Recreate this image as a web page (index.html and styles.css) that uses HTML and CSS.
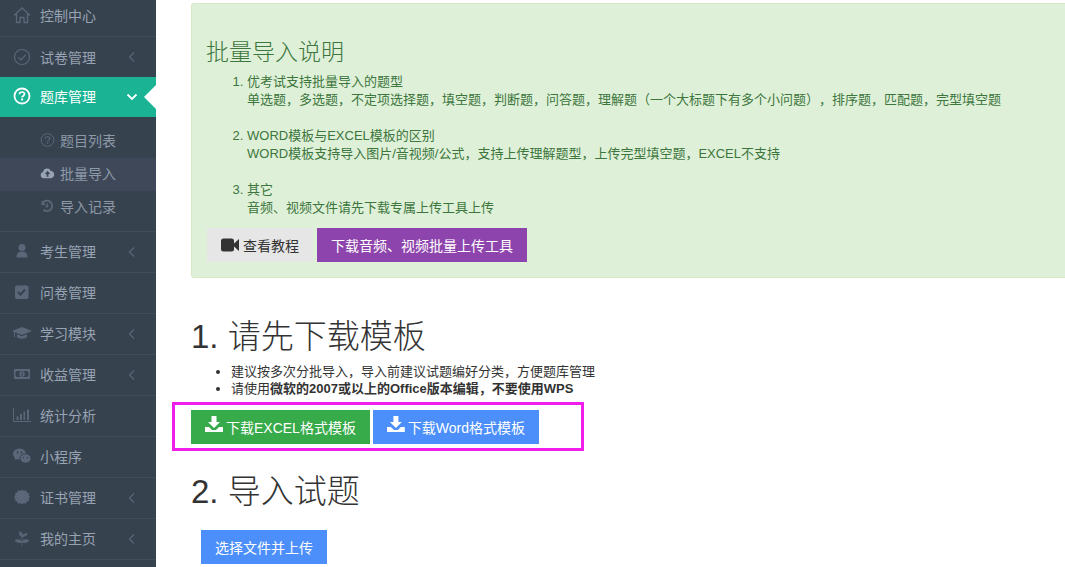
FILE: index.html
```html
<!DOCTYPE html>
<html lang="zh-CN">

<head>
  <meta charset="UTF-8" />
  <title>批量导入</title>
  <link rel="stylesheet" href="styles.css">
</head>

<body>

  <aside class="sidebar">
    <a class="nav-item nav-first">
      <svg class="nav-icon" viewBox="0 0 18 18"><path d="M1 9.500 9 2l8 7.500M3.500 8v8.500h3.500v-5h4v5h3.500V8" fill="none" stroke="currentColor" stroke-width="1.300"/></svg>
      <span>控制中心</span>
    </a>
    <a class="nav-item">
      <svg class="nav-icon" viewBox="0 0 18 18"><circle cx="9" cy="9" r="7.500" fill="none" stroke="currentColor" stroke-width="1.200"/><path d="M5.500 9.500 8 12l4.500-5" fill="none" stroke="currentColor" stroke-width="1.200"/></svg>
      <span>试卷管理</span>
      <svg class="nav-arrow" viewBox="0 0 8 12"><path d="M6 1.500 1.500 6 6 10.500" fill="none" stroke="currentColor" stroke-width="1.100"/></svg>
    </a>
    <a class="nav-item active">
      <svg class="nav-icon" viewBox="0 0 18 18"><circle cx="9" cy="9" r="7.500" fill="none" stroke="currentColor" stroke-width="1.800"/><path d="M6.500 7.200C6.500 5.800 7.600 5 9 5s2.500.8 2.500 2.100c0 1.900-2.400 1.800-2.400 3.500" fill="none" stroke="currentColor" stroke-width="1.700"/><rect x="8.100" y="11.500" width="2" height="2" fill="currentColor"/></svg>
      <span>题库管理</span>
      <svg class="nav-arrow down" viewBox="0 0 12 8"><path d="M1.500 1.500 6 6l4.500-4.500" fill="none" stroke="currentColor" stroke-width="1.800"/></svg>
    </a>
    <div class="subnav">
      <a class="sub-item">
        <svg class="sub-icon" viewBox="0 0 14 14"><circle cx="7" cy="7" r="6.400" fill="none" stroke="currentColor" stroke-width="1"/><path d="M4.800 5.600C4.800 4.400 5.800 3.700 7 3.700s2.200.7 2.200 1.800C9.200 7 7.100 7 7.100 8.600" fill="none" stroke="currentColor" stroke-width="1.100"/><rect x="6.400" y="9.400" width="1.400" height="1.400" fill="currentColor"/></svg>
        <span>题目列表</span>
      </a>
      <a class="sub-item current">
        <svg class="sub-icon" viewBox="0 0 16 14"><path d="M4 12.500a3.300 3.300 0 0 1-.7-6.500A4.300 4.300 0 0 1 11.500 4.800a3.900 3.900 0 0 1 .5 7.700z" fill="currentColor"/><path d="M8 4.500 5 8h2v3h2V8h2z" fill="#3e4859"/></svg>
        <span>批量导入</span>
      </a>
      <a class="sub-item">
        <svg class="sub-icon" viewBox="0 0 14 14"><path d="M2.500 3.500A5.200 5.200 0 1 1 3 10.800" fill="none" stroke="currentColor" stroke-width="1.800"/><path d="M1 1.500 5.500 6H1z" fill="currentColor"/><path d="M7 4.500V7.500H4.800" fill="none" stroke="currentColor" stroke-width="1.300"/></svg>
        <span>导入记录</span>
      </a>
    </div>
    <a class="nav-item">
      <svg class="nav-icon" viewBox="0 0 18 18"><circle cx="9" cy="5.500" r="3.500" fill="currentColor"/><path d="M3.500 15.500c0-4 1.500-6 5.500-6s5.500 2 5.500 6z" fill="currentColor"/></svg>
      <span>考生管理</span>
      <svg class="nav-arrow" viewBox="0 0 8 12"><path d="M6 1.500 1.500 6 6 10.500" fill="none" stroke="currentColor" stroke-width="1.100"/></svg>
    </a>
    <a class="nav-item">
      <svg class="nav-icon" viewBox="0 0 18 18"><rect x="2" y="2.500" width="13.500" height="13.500" rx="2" fill="currentColor"/><path d="M5 9 7.500 11.500l4.500-5" fill="none" stroke="#37424f" stroke-width="2"/></svg>
      <span>问卷管理</span>
    </a>
    <a class="nav-item">
      <svg class="nav-icon wide" viewBox="0 0 20 18"><path d="M10 3 0 7l2 .8V13h1V8.200l2 .8 5 2 10-4z" fill="currentColor"/><path d="M5 10.200V13c1.500 2 8.500 2 10 0v-2.800L10 12.200z" fill="currentColor"/></svg>
      <span>学习模块</span>
      <svg class="nav-arrow" viewBox="0 0 8 12"><path d="M6 1.500 1.500 6 6 10.500" fill="none" stroke="currentColor" stroke-width="1.100"/></svg>
    </a>
    <a class="nav-item">
      <svg class="nav-icon wide" viewBox="0 0 20 18"><path d="M2 4h16v10H2zM4.500 6a1.500 1.500 0 0 1-1 1v4a1.500 1.500 0 0 1 1 1h11a1.500 1.500 0 0 1 1-1V7a1.500 1.500 0 0 1-1-1z" fill="currentColor" fill-rule="evenodd"/><path d="M10 6.200a2.800 2.800 0 1 0 .01 0zM9.500 7.500h1v3.500h-1z" fill="currentColor" fill-rule="evenodd"/></svg>
      <span>收益管理</span>
      <svg class="nav-arrow" viewBox="0 0 8 12"><path d="M6 1.500 1.500 6 6 10.500" fill="none" stroke="currentColor" stroke-width="1.100"/></svg>
    </a>
    <a class="nav-item">
      <svg class="nav-icon wide" viewBox="0 0 20 18"><path d="M1.500 2v13.500H19" fill="none" stroke="currentColor" stroke-width="1"/><path d="M4.500 10.500h2V14h-2zM8 8h2v6H8zM11.500 5.500h1.500V14h-1.500zM15 3.500h2V14h-2z" fill="currentColor"/></svg>
      <span>统计分析</span>
    </a>
    <a class="nav-item">
      <svg class="nav-icon wide" viewBox="0 0 20 18"><ellipse cx="7.500" cy="7" rx="6.500" ry="5.500" fill="currentColor"/><path d="m3.500 10.500-.8 2.800 3-1.500z" fill="currentColor"/><ellipse cx="13.500" cy="11.500" rx="5.500" ry="4.700" fill="currentColor" stroke="#37424f" stroke-width="1"/><circle cx="5.500" cy="5.500" r=".9" fill="#37424f"/><circle cx="9.500" cy="5.500" r=".9" fill="#37424f"/><circle cx="11.500" cy="10.500" r=".7" fill="#37424f"/><circle cx="15.500" cy="10.500" r=".7" fill="#37424f"/></svg>
      <span>小程序</span>
    </a>
    <a class="nav-item">
      <svg class="nav-icon" viewBox="0 0 18 18"><path d="M9 1.500l1.700 1.500 2.200-.7.800 2.100 2.200.6-.3 2.300L17 9l-1.400 1.700.3 2.300-2.200.6-.8 2.100-2.200-.7L9 16.500 7.300 15l-2.200.7-.8-2.100-2.200-.6.300-2.300L1 9l1.400-1.700-.3-2.300 2.200-.6.800-2.100 2.200.7z" fill="currentColor"/></svg>
      <span>证书管理</span>
      <svg class="nav-arrow" viewBox="0 0 8 12"><path d="M6 1.500 1.500 6 6 10.500" fill="none" stroke="currentColor" stroke-width="1.100"/></svg>
    </a>
    <a class="nav-item">
      <svg class="nav-icon" viewBox="0 0 18 18"><path d="M9 3v14M9 8C7 7 6 5 6.500 2.500 8.500 3.500 9.500 5.500 9 8zM9 8c2-1 4-1 5.500-3-2-1-4.500 0-5.500 3zM9 13c-2.500 1-5.500.5-7-1.500 2.500-1.500 6-1 7 1.500zM9 13c1-2.500 4.500-3 7-1.500-1.500 2-4.500 2.500-7 1.500z" fill="currentColor" stroke="currentColor" stroke-width=".7"/></svg>
      <span>我的主页</span>
      <svg class="nav-arrow" viewBox="0 0 8 12"><path d="M6 1.500 1.500 6 6 10.500" fill="none" stroke="currentColor" stroke-width="1.100"/></svg>
    </a>
  </aside>

  <main class="content">
    <section class="notice">
      <h3>批量导入说明</h3>
      <ol>
        <li>优考试支持批量导入的题型<br>单选题，多选题，不定项选择题，填空题，判断题，问答题，理解题（一个大标题下有多个小问题），排序题，匹配题，完型填空题<br><br></li>
        <li>WORD模板与EXCEL模板的区别<br>WORD模板支持导入图片/音视频/公式，支持上传理解题型，上传完型填空题，EXCEL不支持<br><br></li>
        <li>其它<br>音频、视频文件请先下载专属上传工具上传</li>
      </ol>
      <div class="notice-btns">
        <a class="btn btn-grey">
          <svg class="btn-video" viewBox="0 0 18 14"><rect x="0" y="0.500" width="13" height="13" rx="2.500" fill="currentColor"/><path d="M13 5.500 18 1v12l-5-4.500z" fill="currentColor"/></svg>
          查看教程
        </a>
        <a class="btn btn-purple">下载音频、视频批量上传工具</a>
      </div>
    </section>

    <h1 class="step-title">1. 请先下载模板</h1>
    <ul class="tips">
      <li>建议按多次分批导入，导入前建议试题编好分类，方便题库管理</li>
      <li>请使用<b>微软的2007或以上的Office版本编辑，不要使用WPS</b></li>
    </ul>
    <div class="tpl-btns">
      <a class="btn btn-green">
        <svg class="btn-dl" viewBox="0 0 18 16"><path d="M6.500 0h5v6h3.500L9 12 3 6h3.500z" fill="currentColor"/><path d="M0 11h4l3 3h4l3-3h4v5H0z" fill="currentColor"/></svg>
        下载EXCEL格式模板
      </a>
      <a class="btn btn-blue">
        <svg class="btn-dl" viewBox="0 0 18 16"><path d="M6.500 0h5v6h3.500L9 12 3 6h3.500z" fill="currentColor"/><path d="M0 11h4l3 3h4l3-3h4v5H0z" fill="currentColor"/></svg>
        下载Word格式模板
      </a>
      <div class="mark-box"></div>
    </div>

    <h1 class="step-title second">2. 导入试题</h1>
    <a class="btn btn-blue btn-upload">选择文件并上传</a>
  </main>

</body>

</html>
```

FILE: styles.css
```css
html,
body {
  margin: 0;
  padding: 0;
  height: 567px;
  overflow: hidden;
  background: #ffffff;
  font-family: "Liberation Sans", "Noto Sans CJK SC", sans-serif;
  font-size: 13px;
  color: #333;
  text-spacing-trim: space-all;
}

body {
  display: flex;
}

/* sidebar */
.sidebar {
  width: 156px;
  flex: none;
  height: 567px;
  overflow: hidden;
  background: #37424f;
  color: #8d99a8;
}

.nav-item {
  position: relative;
  display: flex;
  align-items: center;
  box-sizing: border-box;
  height: 41px;
  padding-bottom: 2px;
  border-bottom: 1px solid #414c5c;
  font-size: 14px;
  color: #98a3b3;
}

.nav-first {
  height: 37px;
  padding-bottom: 6px;
}

.nav-first + .nav-item {
  height: 40px;
  padding-bottom: 1px;
  border-bottom: none;
}

.nav-item.active {
  height: 40px;
  background: #1ab394;
  color: #ffffff;
  border-bottom: none;
}

.nav-item.active::after {
  content: "";
  position: absolute;
  right: 0;
  top: 8px;
  border: 12px solid transparent;
  border-right-color: #ffffff;
  border-left: none;
}

.nav-icon {
  width: 18px;
  height: 18px;
  margin: 0 9px 0 13px;
  flex: none;
  color: #5b6779;
}

.nav-icon.wide {
  width: 20px;
  margin: 0 8px 0 12px;
}

.nav-item.active .nav-icon {
  color: #ffffff;
}

.nav-arrow {
  position: absolute;
  right: 20px;
  top: 14px;
  width: 8px;
  height: 12px;
  color: #5b6779;
}

.nav-arrow.down {
  width: 12px;
  height: 8px;
  right: 18px;
  top: 16px;
  color: #ffffff;
}

.subnav {
  padding: 8px 0 7px;
  border-bottom: 1px solid #414c5c;
}

.sub-item {
  display: flex;
  align-items: center;
  box-sizing: border-box;
  height: 33px;
  padding: 0 0 3px 40px;
  font-size: 14px;
  color: #8d99a8;
}

.sub-item.current {
  background: #3e4859;
}

.sub-icon {
  width: 15px;
  height: 14px;
  margin-right: 5px;
  flex: none;
  color: #5b6779;
}

.sub-item.current .sub-icon {
  color: #98a3b3;
}

/* content */
.content {
  flex: 1;
  min-width: 0;
  padding: 3px 0 0 35px;
}

.notice {
  width: 900px;
  height: 275px;
  box-sizing: border-box;
  padding: 34px 0 0 15px;
  background: #dff0d8;
  border: 1px solid #d6e9c6;
  border-radius: 3px;
  color: #3c763d;
}

.notice h3 {
  margin: 0 0 0 -1px;
  font-size: 23px;
  line-height: 28px;
  font-weight: 300;
}

.notice ol {
  margin: 7px 0 0;
  padding-left: 40px;
  line-height: 18px;
}

.notice-btns {
  display: flex;
  margin-top: 11px;
}

.btn {
  display: inline-flex;
  align-items: center;
  box-sizing: border-box;
  height: 34px;
  padding: 0 14px;
  font-size: 14px;
  color: #ffffff;
  white-space: nowrap;
}

.btn-grey {
  width: 106px;
  background: #e6e6e6;
  color: #333;
  margin-right: 4px;
}

.btn-purple {
  width: 210px;
  background: #8e44ad;
}

.btn-green {
  width: 179px;
  background: #37aa4a;
}

.btn-blue {
  background: #4c8ffb;
}

.btn-video {
  width: 18px;
  height: 14px;
  margin-right: 4px;
  color: #333;
}

.btn-dl {
  width: 18px;
  height: 16px;
  margin: -6px 3px 0 0;
}

.step-title {
  margin: 37px 0 0;
  font-size: 33px;
  line-height: 44px;
  font-weight: 300;
  color: #333;
}

.step-title.second {
  margin-top: 26px;
}

.tips {
  margin: 4px 0 0;
  padding-left: 40px;
  line-height: 17px;
}

.tpl-btns {
  position: relative;
  display: flex;
  gap: 3px;
  margin-top: 13px;
}

.tpl-btns .btn-blue {
  width: 166px;
}

.mark-box {
  position: absolute;
  left: -19px;
  top: -8px;
  width: 412px;
  height: 49px;
  box-sizing: border-box;
  border: 3px solid #f01eec;
}

.btn-upload {
  margin: 16px 0 0 10px;
  width: 126px;
}
```
